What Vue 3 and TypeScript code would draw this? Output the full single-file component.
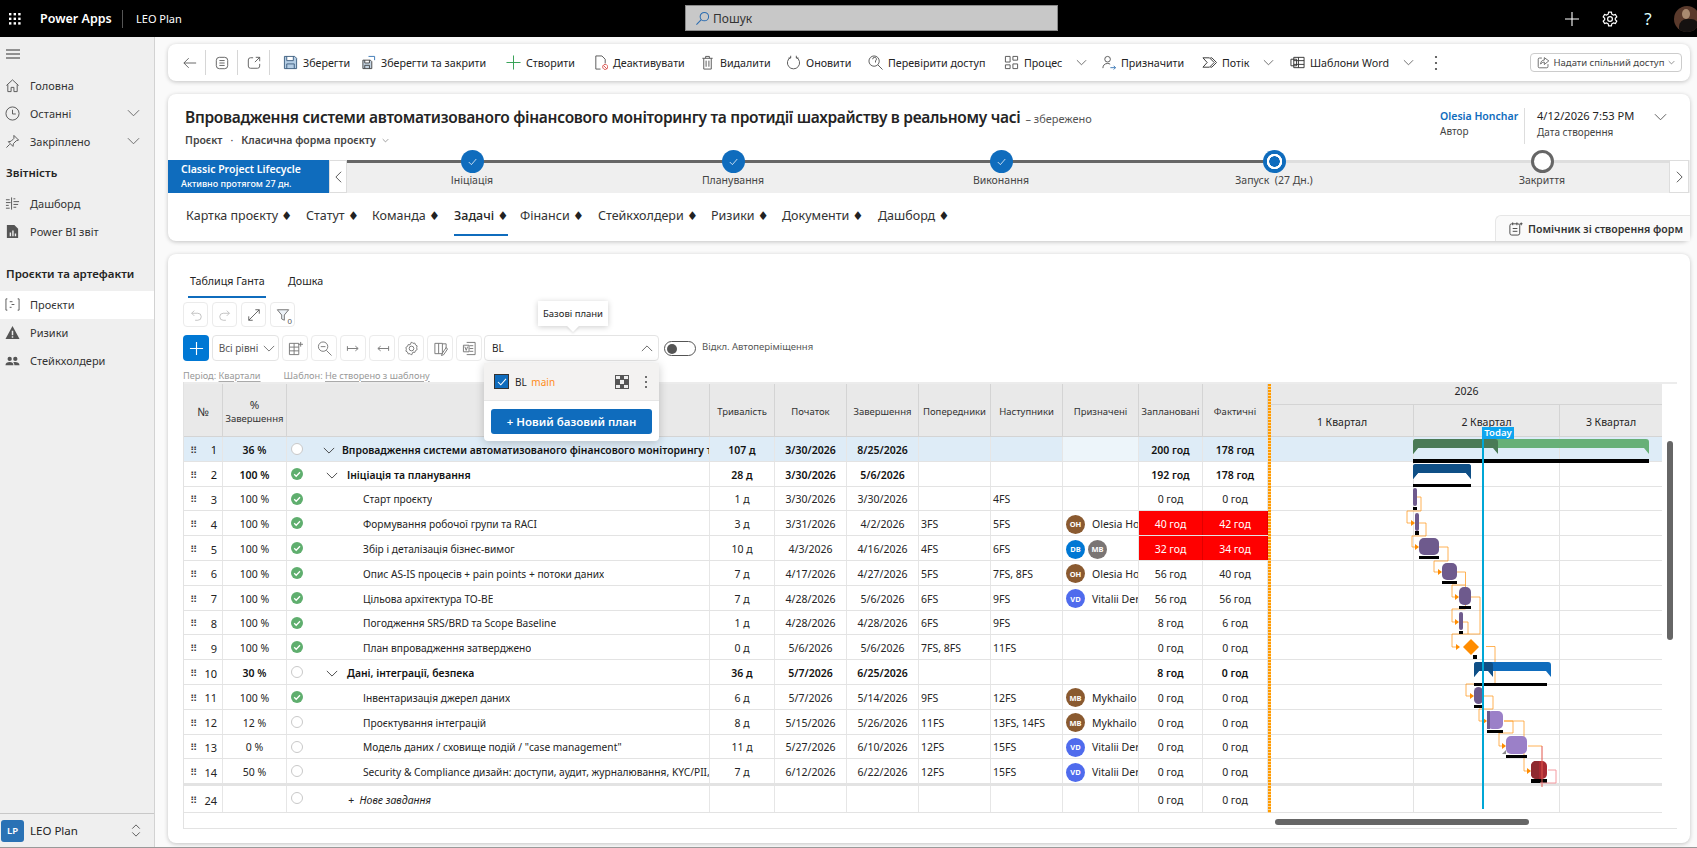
<template>
  <div class="app">
    <header class="topbar">
      <svg class="waffle" viewBox="0 0 14 14" width="14" height="14"><g fill="#fff"><rect v-for="d in waffle" :key="d[0] + '-' + d[1]" :x="d[0]" :y="d[1]" width="2.4" height="2.4" /></g></svg>
      <span class="brand">Power Apps</span>
      <span class="app-name">LEO Plan</span>
      <div class="search">
        <svg viewBox="0 0 16 16" width="15" height="15" fill="none" stroke="#2b6cb0" stroke-width="1.1"><circle cx="10" cy="6" r="4.5" /><path d="M6.7 9.3L1.5 14.5" /></svg>
        <span>Пошук</span>
      </div>
      <div class="top-actions">
        <svg viewBox="0 0 16 16" width="16" height="16" fill="none" stroke="#fff" stroke-width="1.1"><path d="M8 1v14M1 8h14" /></svg>
        <svg viewBox="0 0 16 16" width="16" height="16" fill="none" stroke="#fff" stroke-width="1.2"><circle cx="8" cy="8" r="2.4" /><path d="M6.6 1.2h2.8l.4 2 1.7.9 1.9-.7 1.4 2.5-1.5 1.3v1.6l1.5 1.3-1.4 2.5-1.9-.7-1.7.9-.4 2H6.6l-.4-2-1.7-.9-1.9.7-1.4-2.5 1.5-1.3V7.2L1.2 5.9l1.4-2.5 1.9.7 1.7-.9z" /></svg>
        <span class="help">?</span>
      </div>
      <div class="avatar-top"><b></b><i></i></div>
    </header>

    <div class="body">
      <aside class="nav">
        <div class="burger"><svg viewBox="0 0 14 10" width="14" height="10" fill="none" stroke="#333"><path d="M0 1h14M0 5h14M0 9h14" /></svg></div>
        <template v-for="n in navItems" :key="n.label">
          <div v-if="n.heading" class="nav-head" :class="{ gap: n.gap }">{{ n.label }}</div>
          <div v-else class="nav-item" :class="{ active: n.active }">
            <svg viewBox="0 0 16 16" width="15" height="15" :fill="n.solid ? '#555' : 'none'" :stroke="n.solid ? 'none' : '#555'"><path :d="n.icon" /></svg>
            <span>{{ n.label }}</span>
            <svg v-if="n.chev" class="nav-chev" viewBox="0 0 14 8" width="13" height="8" fill="none" stroke="#666"><path d="M1 1l6 6 6-6" /></svg>
          </div>
        </template>
        <div class="nav-foot">
          <span class="lp">LP</span>
          <span>LEO Plan</span>
          <svg viewBox="0 0 10 16" width="10" height="15" fill="none" stroke="#555"><path d="M1 6l4-4 4 4M1 10l4 4 4-4" /></svg>
        </div>
      </aside>

      <main class="main">
        <section class="cmdbar">
          <div class="cmd-lead">
            <svg viewBox="0 0 16 16" width="14" height="14" fill="none" stroke="#555"><path d="M15 8H1M6.5 2.5L1 8l5.500 5.500" /></svg>
            <i class="sep"></i>
            <svg viewBox="0 0 16 16" width="14" height="14" fill="none" stroke="#555"><rect x="1.5" y="1.5" width="13" height="13" rx="3.5" /><path d="M5 5.200h6M5 8h6M5 10.800h6" /></svg>
            <i class="sep"></i>
            <svg viewBox="0 0 16 16" width="14" height="14" fill="none" stroke="#555"><path d="M7 2H4a2.500 2.500 0 0 0-2.500 2.500v7A2.500 2.500 0 0 0 4 14h8a2.500 2.500 0 0 0 2.500-2.500V9M10 1.500h4.500V6M14.500 1.500L9 7" /></svg>
            <i class="sep"></i>
          </div>
          <div v-for="c in commands" :key="c.label" class="cmd" :style="{ width: c.w + 'px' }">
            <svg viewBox="0 0 16 16" width="15" height="15" :fill="c.fill || 'none'" :stroke="c.color || '#555'"><path :d="c.icon" /><path v-if="c.accent" :d="c.accent" :stroke="c.accentColor" fill="none" /></svg>
            <span>{{ c.label }}</span>
            <svg v-if="c.chev" class="cmd-chev" viewBox="0 0 12 7" width="11" height="7" fill="none" stroke="#666"><path d="M1 1l5 5 5-5" /></svg>
          </div>
          <svg class="cmd-dots" viewBox="0 0 4 16" width="4" height="16" fill="#444"><circle cx="2" cy="2" r="1.1" /><circle cx="2" cy="8" r="1.1" /><circle cx="2" cy="14" r="1.1" /></svg>
          <button class="share">
            <svg viewBox="0 0 16 16" width="13" height="13" fill="none" stroke="#555"><path d="M6 2.500H3A1.500 1.500 0 0 0 1.500 4v9A1.500 1.500 0 0 0 3 14.500h9a1.500 1.500 0 0 0 1.500-1.500v-3M9 2v3C6 5 4.500 7 4.500 10c1-1.800 2.500-2.500 4.500-2.500V10.500l5.500-4.500z" /></svg>
            Надати спільний доступ
            <svg viewBox="0 0 10 6" width="7" height="5" fill="none" stroke="#666"><path d="M1 1l4 4 4-4" /></svg>
          </button>
        </section>

        <section class="record">
          <div class="rec-top">
            <div class="rec-left">
              <div class="rec-title"><h1>Впровадження системи автоматизованого фінансового моніторингу та протидії шахрайству в реальному часі</h1><span>– збережено</span></div>
              <div class="rec-sub"><b>Проєкт</b><i>·</i><b>Класична форма проєкту</b><svg viewBox="0 0 10 6" width="7" height="5" fill="none" stroke="#777"><path d="M1 1l4 4 4-4" /></svg></div>
            </div>
            <div class="rec-meta">
              <div class="meta-a"><a>Olesia Honchar</a><small>Автор</small></div>
              <div class="meta-b"><span>4/12/2026 7:53 PM</span><small>Дата створення</small></div>
              <svg viewBox="0 0 14 8" width="13" height="8" fill="none" stroke="#555"><path d="M1 1l6 6 6-6" /></svg>
            </div>
          </div>

          <div class="bpf">
            <div class="stage"><b>Classic Project Lifecycle</b><span>Активно протягом 27 дн.</span></div>
            <div class="bpf-btn"><svg viewBox="0 0 8 14" width="7" height="14" fill="none" stroke="#444"><path d="M7 1L1 7l6 6" /></svg></div>
            <div class="track">
              <i class="track-done"></i>
              <div v-for="s in stages" :key="s.label" class="step">
                <span class="node" :class="s.state">
                  <svg v-if="s.state === 'done'" viewBox="0 0 12 10" width="9" height="8" fill="none" stroke="#fff"><path d="M1 5l3.500 3.500L11 1" /></svg>
                </span>
                <em>{{ s.label }}</em>
              </div>
            </div>
            <div class="bpf-btn next"><svg viewBox="0 0 8 14" width="7" height="14" fill="none" stroke="#444"><path d="M1 1l6 6-6 6" /></svg></div>
          </div>

          <nav class="rec-tabs">
            <div v-for="t in formTabs" :key="t.label" class="rec-tab" :style="{ width: t.w + 'px' }">
              <span :class="{ on: t.on }">{{ t.label }} <small>♦</small></span>
            </div>
          </nav>
          <div class="copilot">
            <svg viewBox="0 0 16 16" width="15" height="15" fill="none" stroke="#444"><rect x="2" y="3" width="10.5" height="12" rx="2" /><path d="M5 1.500v3M9.500 1.500v3M5 8h5M5 11h5" /><path d="M14 1l.6 1.400L16 3l-1.400.6L14 5l-.6-1.400L12 3l1.400-.6z" fill="#444" stroke="none" /></svg>
            Помічник зі створення форм
          </div>
        </section>

        <section class="plan">
          <div class="plan-tabs"><span class="on">Таблиця Ганта</span><span>Дошка</span></div>

          <div class="tools one">
            <button class="tb dim"><svg viewBox="0 0 16 16" width="14" height="14" fill="none" stroke="#bbb"><path d="M3 6h7a3.500 3.500 0 0 1 0 8H7M3 6l3-3M3 6l3 3" /></svg></button>
            <button class="tb dim"><svg viewBox="0 0 16 16" width="14" height="14" fill="none" stroke="#bbb"><path d="M13 6H6a3.500 3.500 0 0 0 0 8h3M13 6l-3-3M13 6l-3 3" /></svg></button>
            <button class="tb"><svg viewBox="0 0 16 16" width="14" height="14" fill="none" stroke="#555"><path d="M2 14L14 2M9.500 2H14v4.500M2 9.500V14h4.500" /></svg></button>
            <button class="tb filter"><svg viewBox="0 0 16 16" width="14" height="14" fill="#eef3f8" stroke="#666"><path d="M1.500 2h13L9.500 8v6l-3-1.500V8z" /></svg><small>0</small></button>
          </div>

          <div class="tools two">
            <button class="add"><svg viewBox="0 0 16 16" width="15" height="15" fill="none" stroke="#fff" stroke-width="1.2"><path d="M8 1v14M1 8h14" /></svg></button>
            <button class="levels">Всі рівні <svg viewBox="0 0 14 8" width="12" height="7" fill="none" stroke="#666"><path d="M1 1l6 6 6-6" /></svg></button>
            <button v-for="(ic, i) in toolIcons" :key="i" class="tb wide"><svg viewBox="0 0 16 16" width="15" height="15" fill="none" stroke="#777"><path :d="ic" /></svg></button>
            <div class="bl-select">BL <svg viewBox="0 0 14 8" width="12" height="7" fill="none" stroke="#555"><path d="M1 7l6-6 6 6" /></svg></div>
            <span class="toggle"><i></i></span>
            <span class="toggle-label">Відкл. Автоперіміщення</span>
          </div>

          <div class="period">
            <span>Період: <u>Квартали</u></span>
            <span>Шаблон: <u>Не створено з шаблону</u></span>
          </div>

          <div class="grid-wrap">
            <div class="grid-main">
              <div class="left">
                <div class="row head">
                  <div class="big">№</div><div><span><span class="big">%</span><br />Завершення</span></div><div></div>
                  <div v-for="h in heads" :key="h">{{ h }}</div>
                </div>
                <div v-for="r in rows" :key="r.n" class="row" :class="{ bold: r.bold, sel: r.n === 1 }">
                  <div class="c-n"><span class="drag">⠿</span><span>{{ r.n }}</span></div>
                  <div class="c-mid">{{ r.pct }}</div>
                  <div class="c-name">
                    <svg v-if="r.done" class="st" viewBox="0 0 12 12" width="12" height="12"><circle cx="6" cy="6" r="6" fill="#5fae6e" /><path d="M3.200 6.200l2 2 3.800-4" fill="none" stroke="#fff" stroke-width="1.3" /></svg>
                    <svg v-else class="st" viewBox="0 0 12 12" width="12" height="12"><circle cx="6" cy="6" r="5.5" fill="#fff" stroke="#c8c8c8" /></svg>
                    <svg v-if="r.bold" class="tree" :class="'lv' + r.level" viewBox="0 0 14 8" width="12" height="7" fill="none" stroke="#333"><path d="M1 1l6 6 6-6" /></svg>
                    <span class="nm" :class="r.bold ? 'nlv' + r.level : 'task'">{{ r.name }}</span>
                  </div>
                  <div class="c-mid">{{ r.dur }}</div>
                  <div class="c-mid">{{ r.start }}</div>
                  <div class="c-mid">{{ r.end }}</div>
                  <div class="c-dep">{{ r.pred }}</div>
                  <div class="c-dep">{{ r.succ }}</div>
                  <div class="c-who" :class="{ pale: r.n === 1 }">
                    <span v-for="a in r.people" :key="a.t" class="ava" :style="{ background: a.c }">{{ a.t }}</span>
                    <span v-if="r.who" class="who">{{ r.who }}</span>
                  </div>
                  <div class="c-mid" :class="{ red: r.red }">{{ r.plan }}</div>
                  <div class="c-mid" :class="{ red: r.red }">{{ r.fact }}</div>
                </div>
                <div class="row last">
                  <div class="c-n"><span class="drag">⠿</span><span>24</span></div>
                  <div></div>
                  <div class="c-name">
                    <svg class="st" viewBox="0 0 12 12" width="12" height="12"><circle cx="6" cy="6" r="5.5" fill="#fff" stroke="#c8c8c8" /></svg>
                    <span class="new-task">+ &nbsp;Нове завдання</span>
                  </div>
                  <div></div><div></div><div></div><div></div><div></div><div></div>
                  <div class="c-mid">0 год</div><div class="c-mid">0 год</div>
                </div>
              </div>

              <div class="divider"></div>

              <div class="gantt">
                <div class="g-year">2026</div>
                <div class="g-quarters"><div>1 Квартал</div><div>2 Квартал</div><div>3 Квартал</div></div>
                <div v-for="r in rows" :key="r.n" class="g-row" :class="{ sel: r.n === 1 }"><i></i><i></i><i></i></div>
                <div class="g-row last"><i></i><i></i><i></i></div>
                <svg class="g-canvas" viewBox="1271 437 392 376" width="392" height="376">
                  <g fill="none" stroke="#ff9a1f" stroke-opacity="0.75">
                    <polyline v-for="(l, i) in links" :key="i" :points="l" />
                  </g>
                  <g fill="#ff8c00"><path v-for="(a, i) in arrows" :key="i" :d="`M${a[0] - 4} ${a[1] - 3}L${a[0]} ${a[1]}L${a[0] - 4} ${a[1] + 3}z`" /></g>
                  <g v-for="s in summaries" :key="s.x"><path :d="summaryPath(s.x, s.y, s.w)" :fill="s.fill" /><path :d="summaryPath(s.x, s.y, s.dark)" :fill="s.darkFill" /></g>
                  <rect v-for="(b, i) in bars" :key="i" :x="b[0]" :y="b[1]" :width="b[2]" :height="b[3]" :rx="Math.min(5, b[2] / 2)" :fill="b[4]" />
                  <rect x="1487" y="711" width="3" height="18" fill="#6e5a8d" />
                  <path d="M1531 766a5 5 0 0 1 5-5h3v18h-3a5 5 0 0 1-5-5z" fill="#8f2a30" />
                  <rect v-for="(b, i) in baselines" :key="'b' + i" :x="b[0]" :y="b[1]" :width="b[2]" :height="b[3]" fill="#000" />
                  <path d="M1471 639l8 8-8 8-8-8z" fill="#ff8c00" />
                  <path d="M1502 754l4-4v4z" fill="#888" />
                  <polyline points="1542,746 1542,787" fill="none" stroke="#e2574c" />
                  <polyline points="1548,770 1556,770 1556,783 1540,783" fill="none" stroke="#f59aa0" />
                  <rect x="1482" y="437" width="2" height="372" fill="#00a7d6" />
                </svg>
                <span class="today">Today</span>
              </div>
            </div>
            <div class="hscroll"><i></i></div>
            <span class="vscroll"></span>
          </div>

          <div class="tip">Базові плани</div>
          <div class="bl-pop">
            <div class="bl-row">
              <span class="check"><svg viewBox="0 0 12 10" width="10" height="8" fill="none" stroke="#fff" stroke-width="1.3"><path d="M1 5l3.500 3.500L11 1" /></svg></span>
              <span class="bl-name">BL <em>main</em></span>
              <svg class="bl-ic" viewBox="0 0 14 14" width="14" height="14"><rect width="14" height="14" fill="#555" /><path d="M1 1h4v3H1zM9 1h4v3H9zM5 5h4v4H5zM1 10h4v3H1zM9 10h4v3H9z" fill="#eee" /></svg>
              <svg viewBox="0 0 4 14" width="4" height="14" fill="#444"><circle cx="2" cy="2" r="1" /><circle cx="2" cy="7" r="1" /><circle cx="2" cy="12" r="1" /></svg>
            </div>
            <button class="bl-new">+ Новий базовий план</button>
          </div>
        </section>
      </main>
    </div>
  </div>
</template>

<script setup lang="ts">
interface Person { t: string; c: string }
interface Row {
  n: number
  pct: string
  done: boolean
  name: string
  bold?: boolean
  level?: number
  dur: string
  start: string
  end: string
  pred?: string
  succ?: string
  people?: Person[]
  who?: string
  plan: string
  fact: string
  red?: boolean
}

const waffle: number[][] = []
for (let x = 0; x < 3; x++) for (let y = 0; y < 3; y++) waffle.push([1 + x * 4.6, 1 + y * 4.6])

const navItems = [
  { label: 'Головна', icon: 'M1.500 8L8 2l6.500 6M3 7v7.500h3.500V10h3v4.500H13V7' },
  { label: 'Останні', chev: true, icon: 'M8 1a7 7 0 1 0 0 14A7 7 0 0 0 8 1zM8 4v4.500h3.500' },
  { label: 'Закріплено', chev: true, icon: 'M9.500 1.500l5 5-2.500.7-3 3-.5 3-5-5 3-.5 3-3zM5 11l-3.500 3.500' },
  { label: 'Звітність', heading: true },
  { label: 'Дашборд', icon: 'M7 1.500v13M1 4h4M1 7h5M1 10h3M9 3h2M9 6h6M9 9h5M9 12h3M1 13h4' },
  { label: 'Power BI звіт', solid: true, icon: 'M2 1h8l4 4v10H2zM5 13h1.500V9H5zM7.700 13h1.500V7H7.700zM10.400 13h1.500V10h-1.500z' },
  { label: 'Проєкти та артефакти', heading: true, gap: true },
  { label: 'Проєкти', active: true, icon: 'M2.500 2H1v12h1.500M13.500 2H15v12h-1.500M5 5h3M7 8h3M5 11h2' },
  { label: 'Ризики', solid: true, icon: 'M8 1l7.500 14H.5zM7.200 6v5h1.600V6zM7.200 12v1.500h1.600V12z' },
  { label: 'Стейкхолдери', solid: true, icon: 'M5 4a2.300 2.300 0 1 1 0 4.600A2.300 2.300 0 0 1 5 4zM11 4a2.300 2.300 0 1 1 0 4.600A2.300 2.300 0 0 1 11 4zM.5 13c0-2.500 2-3.500 4.500-3.500s4 1 4 3.500zM10 13c0-1.500-.5-2.500-1.300-3.200 2.800-.8 6.800 0 6.800 3.200z' },
]

const commands = [
  { label: 'Зберегти', w: 78, icon: 'M1.500 1.500h11l2 2v11h-13zM4 1.500v4.500h7V1.500M4 14.500V9.500h8v5', color: '#3f5f80', fill: '#b4cde4' },
  { label: 'Зберегти та закрити', w: 145, icon: 'M2 5.500h8l1.500 1.500v7.500H2zM4 5.500v3h5v-3M4 14.500v-3.500h5v3.500', accent: 'M8 1.500h6.500v4', accentColor: '#3b78b5', color: '#444', fill: '#c4d4e2' },
  { label: 'Створити', w: 87, icon: 'M8 .5v15M.5 8h15', color: '#2e9e4f' },
  { label: 'Деактивувати', w: 107, icon: 'M3 1h6.500L13 4.500V9M3 1v14h5', accent: 'M13 10a2.700 2.700 0 1 0 .01 0zM11 11l4 4', accentColor: '#d9534f', color: '#555' },
  { label: 'Видалити', w: 86, icon: 'M2.500 3.500h11M6 3.500V1.500h4v2M4 3.500v11.500h8V3.500M6.500 6v6.500M9.500 6v6.500' },
  { label: 'Оновити', w: 82, icon: 'M5 2.500a6.500 6.500 0 1 0 6 0M5 .8v2.500H2.500M11 .8v2.500h2.500' },
  { label: 'Перевірити доступ', w: 136, icon: 'M6.500 1a5.500 5.500 0 1 0 0 11 5.500 5.500 0 0 0 0-11zM10.500 10.500l5 5M5 4.500a2 2 0 1 1 3 1.700V8' },
  { label: 'Процес', w: 97, chev: true, icon: 'M1.500 1.500h5v6h-5zM9.500 1.500h5v4h-5zM9.500 9.500h5v5h-5zM1.500 10.500h5v4h-5z', color: '#555' },
  { label: 'Призначити', w: 101, icon: 'M7 1.500a3 3 0 1 1 0 6 3 3 0 0 1 0-6zM2 14c0-3 2-5 5-5 1 0 2 .2 2.800.8', accent: 'M10 13.500h5.500M13.500 11.500l2 2-2 2', accentColor: '#3b78b5' },
  { label: 'Потік', w: 88, chev: true, icon: 'M1 3h7l5 5-5 5H1l4.500-5zM9 3h1.500l5 5-5 5H9', color: '#333' },
  { label: 'Шаблони Word', w: 141, chev: true, icon: 'M4 2.500h11v11H4zM9 2.500v11M4 6h11M4 10h11M1 4.500h6v7H1z', color: '#333' },
]

const stages = [
  { label: 'Ініціація', state: 'done' },
  { label: 'Планування', state: 'done' },
  { label: 'Виконання', state: 'done' },
  { label: 'Запуск  (27 Дн.)', state: 'active' },
  { label: 'Закриття', state: 'todo' },
]

const formTabs = [
  { label: 'Картка проєкту', w: 120 },
  { label: 'Статут', w: 66 },
  { label: 'Команда', w: 82 },
  { label: 'Задачі', w: 66, on: true },
  { label: 'Фінанси', w: 78 },
  { label: 'Стейкхолдери', w: 113 },
  { label: 'Ризики', w: 71 },
  { label: 'Документи', w: 96 },
  { label: 'Дашборд', w: 90 },
]

const toolIcons = [
  'M1.500 2.500h10v12h-10zM1.500 6.500h10M1.500 10.500h10M6.500 2.500v12M13.500 1v5M11 3.500h5',
  'M6.500 1a5 5 0 1 0 0 10 5 5 0 0 0 0-10zM4 6h5M10 10l5.500 5.500',
  'M1.500 8h11M1.500 5.500v5M10 5.500L13 8l-3 2.500',
  'M14.500 8h-11M14.500 5.500v5M6 5.500L3 8l3 2.500',
  'M8 5.500a2.500 2.500 0 1 0 0 5 2.500 2.500 0 0 0 0-5zM8 1l1.500 1.500 2-.3.8 2 1.700 1-.5 2 .5 2-1.700 1-.8 2-2-.3L8 15l-1.500-1.500-2 .3-.8-2-1.700-1 .5-2-.5-2 1.700-1 .8-2 2 .3z',
  'M2 2.500h8v11H2zM6 2.500v11M10 3h4v5M14 7l-4 6-1 2.500 2.500-1 4-6z',
  'M5 1.500h9v13H5M8 5h4M8 8h4M8 11h4M1.500 4.500h6v7h-6zM3 6l1.500 4L6 6',
]

const heads = ['Тривалість', 'Початок', 'Завершення', 'Попередники', 'Наступники', 'Призначені', 'Заплановані', 'Фактичні']

const OH: Person = { t: 'OH', c: '#8a5a30' }
const VD: Person = { t: 'VD', c: '#4f6bed' }
const MB: Person = { t: 'MB', c: '#8a5a30' }

const rows: Row[] = [
  { n: 1, pct: '36 %', done: false, name: 'Впровадження системи автоматизованого фінансового моніторингу та протидії шахрайству в реальному часі', bold: true, level: 0, dur: '107 д', start: '3/30/2026', end: '8/25/2026', plan: '200 год', fact: '178 год' },
  { n: 2, pct: '100 %', done: true, name: 'Ініціація та планування', bold: true, level: 1, dur: '28 д', start: '3/30/2026', end: '5/6/2026', plan: '192 год', fact: '178 год' },
  { n: 3, pct: '100 %', done: true, name: 'Старт проєкту', dur: '1 д', start: '3/30/2026', end: '3/30/2026', succ: '4FS', plan: '0 год', fact: '0 год' },
  { n: 4, pct: '100 %', done: true, name: 'Формування робочої групи та RACI', dur: '3 д', start: '3/31/2026', end: '4/2/2026', pred: '3FS', succ: '5FS', people: [OH], who: 'Olesia Honchar', plan: '40 год', fact: '42 год', red: true },
  { n: 5, pct: '100 %', done: true, name: 'Збір і деталізація бізнес-вимог', dur: '10 д', start: '4/3/2026', end: '4/16/2026', pred: '4FS', succ: '6FS', people: [{ t: 'DB', c: '#0078d4' }, { t: 'MB', c: '#7a7574' }], plan: '32 год', fact: '34 год', red: true },
  { n: 6, pct: '100 %', done: true, name: 'Опис AS-IS процесів + pain points + потоки даних', dur: '7 д', start: '4/17/2026', end: '4/27/2026', pred: '5FS', succ: '7FS, 8FS', people: [OH], who: 'Olesia Honchar', plan: '56 год', fact: '40 год' },
  { n: 7, pct: '100 %', done: true, name: 'Цільова архітектура TO-BE', dur: '7 д', start: '4/28/2026', end: '5/6/2026', pred: '6FS', succ: '9FS', people: [VD], who: 'Vitalii Derkach', plan: '56 год', fact: '56 год' },
  { n: 8, pct: '100 %', done: true, name: 'Погодження SRS/BRD та Scope Baseline', dur: '1 д', start: '4/28/2026', end: '4/28/2026', pred: '6FS', succ: '9FS', plan: '8 год', fact: '6 год' },
  { n: 9, pct: '100 %', done: true, name: 'План впровадження затверджено', dur: '0 д', start: '5/6/2026', end: '5/6/2026', pred: '7FS, 8FS', succ: '11FS', plan: '0 год', fact: '0 год' },
  { n: 10, pct: '30 %', done: false, name: 'Дані, інтеграції, безпека', bold: true, level: 1, dur: '36 д', start: '5/7/2026', end: '6/25/2026', plan: '8 год', fact: '0 год' },
  { n: 11, pct: '100 %', done: true, name: 'Інвентаризація джерел даних', dur: '6 д', start: '5/7/2026', end: '5/14/2026', pred: '9FS', succ: '12FS', people: [MB], who: 'Mykhailo B', plan: '0 год', fact: '0 год' },
  { n: 12, pct: '12 %', done: false, name: 'Проєктування інтеграцій', dur: '8 д', start: '5/15/2026', end: '5/26/2026', pred: '11FS', succ: '13FS, 14FS', people: [MB], who: 'Mykhailo B', plan: '0 год', fact: '0 год' },
  { n: 13, pct: '0 %', done: false, name: 'Модель даних / сховище подій / "case management"', dur: '11 д', start: '5/27/2026', end: '6/10/2026', pred: '12FS', succ: '15FS', people: [VD], who: 'Vitalii Derkach', plan: '0 год', fact: '0 год' },
  { n: 14, pct: '50 %', done: false, name: 'Security & Compliance дизайн: доступи, аудит, журналювання, KYC/PII, ризики', dur: '7 д', start: '6/12/2026', end: '6/22/2026', pred: '12FS', succ: '15FS', people: [VD], who: 'Vitalii Derkach', plan: '0 год', fact: '0 год' },
]

const PURPLE = '#6e5a8d'
const LILAC = '#9b80c8'
const bars: [number, number, number, number, string][] = [
  [1413, 488, 4, 18, PURPLE],
  [1415, 513, 4, 18, PURPLE],
  [1419, 538, 20, 17, PURPLE],
  [1442, 563, 15, 17, PURPLE],
  [1459, 587, 12, 18, PURPLE],
  [1459, 612, 4, 18, PURPLE],
  [1474, 687, 9, 17, PURPLE],
  [1487, 711, 16, 18, LILAC],
  [1506, 736, 21, 18, LILAC],
  [1531, 761, 16, 18, '#a82a33'],
]
const baselines = [
  [1413, 459, 236, 4],
  [1413, 484, 58, 3],
  [1413, 507, 4, 3],
  [1415, 531, 4, 4],
  [1419, 556, 20, 3],
  [1442, 581, 15, 3],
  [1459, 606, 12, 3],
  [1459, 631, 4, 3],
  [1473, 655, 4, 4],
  [1474, 683, 73, 3],
  [1474, 705, 8, 3],
  [1487, 730, 16, 3],
  [1506, 755, 21, 3],
  [1531, 779, 16, 4],
]
const summaries = [
  { x: 1413, y: 439, w: 236, dark: 85, fill: '#67b077', darkFill: '#4a7a56' },
  { x: 1413, y: 464, w: 58, dark: 58, fill: '#0f4f86', darkFill: '#0f4f86' },
  { x: 1474, y: 662, w: 77, dark: 19, fill: '#0f6cbd', darkFill: '#0f4f86' },
]
function summaryPath(x: number, y: number, w: number) {
  // bar with the two small wedges hanging from its ends
  const r = x + w
  return `M${x} ${y + 3}a3 3 0 0 1 3-3H${r - 3}a3 3 0 0 1 3 3v12l-5-6H${x + 5}l-5 6z`
}

const links = [
  '1417,497 1421,497 1421,511 1407,511 1407,523 1413,523',
  '1419,523 1426,523 1426,536 1412,536 1412,547 1418,547',
  '1439,547 1448,547 1448,561 1434,561 1434,572 1441,572',
  '1457,572 1465.5,572 1465.5,585 1452,585 1452,597 1458,597',
  '1465.5,585 1465.5,609 1452,609 1452,622 1458,622',
  '1471,597 1480,597 1480,634 1452,634 1452,647 1459,647',
  '1463,622 1468,622 1468,634',
  '1486,646.5 1495,646.5 1495,684 1466,684 1466,696 1473,696',
  '1484,696 1493,696 1493,709 1479,709 1479,721 1486,721',
  '1504,721 1513,721 1513,733 1499,733 1499,746 1505,746',
  '1504,721 1524,721 1524,771 1530,771',
  '1528,746 1542,746',
]
const arrows = [[1415, 523], [1419, 547], [1442, 572], [1459, 597], [1459, 622], [1460, 647], [1474, 696], [1487, 721], [1506, 746], [1531, 771]]
</script>

<style>
html, body { margin: 0; background: #fafafa; overflow: hidden; }
</style>

<style scoped>
.app { width: 1697px; height: 848px; display: flex; flex-direction: column; font-family: "Noto Sans", "Open Sans", sans-serif; color: #242424; overflow: hidden; box-sizing: border-box; border-bottom: 1px solid #999; }
.app * { box-sizing: border-box; }

.topbar { height: 37px; background: #000; color: #fff; display: flex; align-items: center; flex: none; position: relative; }
.waffle { margin-left: 8px; }
.brand { margin-left: 18px; font-size: 12.5px; font-weight: 600; width: 82px; white-space: nowrap; }
.app-name { font-size: 11px; border-left: 1px solid #555; padding-left: 13px; height: 18px; line-height: 18px; width: 120px; }
.search { position: absolute; left: 685px; top: 5px; width: 373px; height: 26px; background: #c8c8c8; border: 1px solid #8a8a8a; display: flex; align-items: center; gap: 3px; padding-left: 9px; font-size: 12px; color: #333; }
.top-actions { margin-left: auto; display: flex; align-items: center; gap: 22px; margin-right: 18px; }
.help { font-size: 17px; width: 16px; text-align: center; color: #dff; }
.avatar-top { width: 26px; height: 26px; border-radius: 50%; background: #5a3a2c; margin-right: -3px; position: relative; overflow: hidden; }
.avatar-top b { position: absolute; left: 8px; top: 3px; width: 8px; height: 10px; border-radius: 50%; background: #a98a70; }
.avatar-top i { position: absolute; left: 5px; top: 13px; width: 20px; height: 16px; border-radius: 8px 8px 0 0; background: #151110; }

.body { flex: 1; display: flex; min-height: 0; }
.nav { width: 155px; flex: none; background: #efefef; border-right: 1px solid #d2d2d2; display: flex; flex-direction: column; font-size: 11px; }
.burger { height: 34px; display: flex; align-items: center; padding-left: 6px; margin-bottom: 1px; }
.nav-item { height: 28px; display: flex; align-items: center; padding: 0 0 2px 5px; gap: 10px; color: #333; }
.nav-item.active { background: #fff; }
.nav-chev { margin-left: auto; margin-right: 14px; }
.nav-head { height: 34px; line-height: 34px; padding-left: 6px; font-weight: 600; font-size: 11.5px; color: #242424; }
.nav-head.gap { margin-top: 11px; }
.nav-foot { margin-top: auto; height: 34px; border-top: 1px solid #c8c8c8; display: flex; align-items: center; padding: 0 13px 0 1px; gap: 6px; font-size: 11.5px; }
.nav-foot svg { margin-left: auto; }
.lp { width: 23px; height: 22px; border-radius: 3px; background: #2a72b5; color: #fff; font-size: 9.5px; font-weight: 600; display: flex; align-items: center; justify-content: center; }

.main { flex: 1; position: relative; padding: 7px 7px 0 13px; display: flex; flex-direction: column; gap: 13px; min-width: 0; }
.cmdbar { height: 37px; flex: none; background: #fff; border-radius: 8px; box-shadow: 0 1px 4px rgba(0, 0, 0, .22); display: flex; align-items: center; font-size: 10.7px; padding-left: 15px; }
.cmd-lead { display: flex; align-items: center; width: 100px; gap: 8px; }
.sep { width: 1px; height: 25px; background: #d6d6d6; display: block; margin-right: 1px; }
.cmd { display: flex; align-items: center; gap: 5px; white-space: nowrap; flex: none; }
.cmd-chev { margin-left: 9px; }
.cmd-dots { margin-left: 3px; }
.share { margin-left: auto; margin-right: 8px; width: 152px; height: 19px; border: 1px solid #ccc; border-radius: 4px; background: #fff; font: inherit; font-size: 9.5px; color: #444; display: flex; align-items: center; justify-content: center; gap: 4px; padding: 0; white-space: nowrap; }

.record { height: 147px; flex: none; background: #fff; border-radius: 8px; box-shadow: 0 1px 4px rgba(0, 0, 0, .22); position: relative; }
.rec-top { height: 66px; display: flex; justify-content: space-between; padding: 12px 23px 0 17px; }
.rec-title { display: flex; align-items: baseline; gap: 5px; white-space: nowrap; }
.rec-title h1 { margin: 0; font-size: 15.5px; letter-spacing: -0.3px; font-weight: 600; line-height: 22px; color: #242424; }
.rec-title span { font-size: 11px; color: #555; }
.rec-sub { margin-top: 5px; font-size: 10.5px; display: flex; align-items: center; gap: 6px; color: #444; }
.rec-sub b { font-weight: 600; }
.rec-sub i { font-style: normal; margin: 0 2px; }
.rec-meta { display: flex; align-items: flex-start; font-size: 11.1px; padding-top: 2px; }
.meta-a { width: 84px; display: flex; flex-direction: column; }
.meta-a a { color: #0f6cbd; font-weight: 600; white-space: nowrap; font-size: 10.5px; line-height: 16px; }
.rec-meta small { font-size: 10px; margin-top: 0; color: #444; display: block; }
.meta-b { border-left: 1px solid #ddd; padding: 0 0 4px 12px; width: 130px; display: flex; flex-direction: column; white-space: nowrap; line-height: 16px; }
.rec-meta > svg { margin-top: 5px; }

.bpf { height: 33px; display: flex; background: #efefef; }
.stage { width: 161px; background: #0f6cbd; color: #fff; padding: 2px 0 0 13px; display: flex; flex-direction: column; white-space: nowrap; }
.stage b { font-size: 10.5px; font-weight: 600; line-height: 15px; }
.stage span { font-size: 9px; line-height: 13px; font-weight: 500; }
.bpf-btn { width: 18px; background: #fff; border: 1px solid #ddd; display: flex; align-items: center; justify-content: center; }
.bpf-btn.next { width: 20px; margin-right: 1px; }
.track { flex: 1; position: relative; display: grid; grid-template-columns: 250px 272px 264px 282px 1fr; border-top: 3px solid #dedede; }
.track-done { position: absolute; left: 0; top: -3px; width: 927px; height: 3px; background: #666; }
.step { display: flex; flex-direction: column; align-items: center; margin-top: -13px; position: relative; }
.node { width: 23px; height: 23px; border-radius: 50%; display: flex; align-items: center; justify-content: center; background: #0f6cbd; }
.node.active { background: radial-gradient(circle, #0f6cbd 0 5px, #fff 5.5px 7.5px, #0f6cbd 8px); }
.node.todo { background: #fff; border: 3px solid #666; }
.step em { font-style: normal; font-size: 10.5px; margin-top: 0; white-space: pre; color: #444; line-height: 15px; }

.rec-tabs { height: 48px; display: flex; padding-left: 18px; font-size: 12.5px; align-items: stretch; }
.rec-tab { display: flex; flex: none; white-space: nowrap; }
.rec-tab span { height: 43px; line-height: 46px; color: #333; }
.rec-tab span.on { border-bottom: 2px solid #0f6cbd; color: #242424; font-weight: 500; }
.rec-tab small { font-size: 12px; font-family: "DejaVu Sans", sans-serif; color: #222; line-height: 1; }
.copilot { position: absolute; right: 0; bottom: 0; width: 195px; height: 26px; background: #fafafa; border: 1px solid #e6e6e6; border-width: 1px 0 0 1px; border-radius: 6px 0 0 0; display: flex; align-items: center; gap: 5px; padding-left: 12px; font-size: 10.6px; font-weight: 600; white-space: nowrap; color: #333; }

.plan { flex: 1; min-height: 0; margin-bottom: 4px; background: #fff; border-radius: 8px; box-shadow: 0 1px 4px rgba(0, 0, 0, .22); position: relative; padding: 14px 13px 0 15px; }
.plan-tabs { height: 30px; display: flex; gap: 20px; font-size: 10.7px; padding-left: 5px; }
.plan-tabs span { height: 30px; line-height: 26px; padding: 0 2px; white-space: nowrap; }
.plan-tabs .on { width: 78px; border-bottom: 2px solid #0f6cbd; padding: 0 0 0 2px; }
.tools { display: flex; align-items: center; gap: 4px; }
.tools.one { margin-top: 4px; height: 25px; }
.tools.two { margin-top: 8px; height: 26px; gap: 3px; }
.tb { width: 25px; height: 25px; border: 1px solid #ebebeb; border-radius: 4px; background: #fff; display: flex; align-items: center; justify-content: center; padding: 0; position: relative; }
.tb.wide { height: 26px; width: 26px; }
.filter small { position: absolute; right: 2px; bottom: 0; font-size: 8px; color: #555; }
.add { width: 26px; height: 26px; border: 0; border-radius: 4px; background: #0078d4; display: flex; align-items: center; justify-content: center; padding: 0; }
.levels { width: 67px; height: 26px; border: 1px solid #e4e4e4; border-radius: 4px; background: #fff; font: inherit; font-size: 10px; color: #555; display: flex; align-items: center; justify-content: center; gap: 5px; padding: 0 0 0 3px; white-space: nowrap; }
.bl-select { width: 175px; height: 26px; border: 1px solid #e4e4e4; border-radius: 4px; font-size: 10px; display: flex; align-items: center; justify-content: space-between; padding: 0 5px 0 7px; margin-left: -1px; }
.toggle { width: 32px; height: 15px; border: 1px solid #555; border-radius: 8px; margin-left: 2px; padding: 2px; display: block; }
.toggle i { display: block; width: 10px; height: 10px; border-radius: 50%; background: #555; }
.toggle-label { font-size: 9.5px; color: #555; margin: -4px 0 0 3px; white-space: nowrap; }
.period { height: 21px; display: flex; align-items: center; gap: 23px; font-size: 9.2px; color: #999; white-space: nowrap; padding-top: 7px; }
.period u { text-decoration-color: #aaa; text-underline-offset: 2px; }

.grid-wrap { width: 1494px; position: relative; border-left: 1px solid #e2e2e2; }
.grid-wrap::before { content: ''; position: absolute; left: 0; right: 0; top: 0; height: 2px; background: #ececec; }
.grid-main { display: flex; align-items: flex-start; }
.left { width: 1084px; flex: none; }
.row { display: grid; grid-template-columns: 39px 64px 423px 65px 72px 72px 72px 72px 76px 64px 65px; height: 24.8px; font-size: 10.5px; border-bottom: 1px solid #e3e3e3; }
.row > div { border-right: 1px solid #e6e6e6; min-width: 0; display: flex; align-items: center; overflow: hidden; white-space: nowrap; padding-top: 2px; }
.row.head { height: 55px; background: #e9e9e9; border-bottom: 1px solid #d4d4d4; padding-top: 2px; font-size: 9.5px; }
.row.head > div { justify-content: center; text-align: center; border-right: 1px solid #d4d4d4; color: #333; line-height: 13px; padding-top: 3px; }
.row.head .big { font-size: 11.5px; }
.row.bold { font-weight: 600; color: #111; }
.row.sel { background: #deecf7; }
.c-n { justify-content: space-between; padding: 2px 5px 0 6px; font-weight: 400; font-size: 11px; }
.drag { font-size: 10px; color: #333; }
.c-mid { justify-content: center; }
.c-dep { padding-left: 2px; }
.c-name { position: relative; padding-left: 4px; }
.st { position: absolute; left: 4px; top: 6px; }
.tree { position: absolute; top: 10px; }
.tree.lv0 { left: 36px; }
.tree.lv1 { left: 39px; }
.nm { overflow: hidden; }
.nlv0 { padding-left: 51px; font-size: 10.4px; }
.nlv1 { padding-left: 56px; font-size: 10.4px; }
.task { padding-left: 72px; font-size: 10.2px; }
.c-who { gap: 3px; padding-left: 3px; }
.c-who.pale { background: #edf5fa; }
.ava { width: 19px; height: 19px; border-radius: 50%; color: #fff; font-size: 7.5px; font-weight: 700; display: flex; align-items: center; justify-content: center; flex: none; }
.who { margin-left: 4px; }
.red { background: #ff0000; color: #fff; border-right-color: #e00000 !important; }
.row.last { height: 29px; border-top: 2px solid #e3e3e3; }
.new-task { font-style: italic; padding-left: 57px; }

.divider { width: 3px; flex: none; align-self: stretch; margin-top: 2px; background: repeating-linear-gradient(to bottom, #ff9a00 0 2px, #ffd38a 2px 3px); }
.gantt { width: 391px; flex: none; position: relative; font-size: 10.5px; }
.g-year { height: 23px; background: #e9e9e9; border-bottom: 1px solid #d4d4d4; border-top: 2px solid #ececec; display: flex; align-items: center; justify-content: center; padding-bottom: 6px; }
.g-quarters { height: 32px; display: grid; grid-template-columns: 143px 146px 102px; background: #e9e9e9; border-bottom: 1px solid #d4d4d4; }
.g-quarters div { display: flex; align-items: center; justify-content: center; border-right: 1px solid #d4d4d4; padding-top: 3px; }
.g-quarters div:last-child { border-right: 0; }
.g-row { height: 24.8px; display: grid; grid-template-columns: 143px 146px 102px; border-bottom: 1px solid #e3e3e3; }
.g-row i { border-right: 1px solid #e3e3e3; display: block; }
.g-row i:last-child { border-right: 0; }
.g-row.sel { background: #deecf7; }
.g-row.last { height: 29px; border-top: 2px solid #e3e3e3; }
.g-canvas { position: absolute; left: 0; top: 55px; }
.today { position: absolute; left: 211px; top: 45px; width: 32px; height: 12px; background: #0ea5f0; color: #fff; font-size: 9.5px; font-weight: 600; line-height: 12px; text-align: center; }
.hscroll { height: 16px; border-bottom: 1px solid #e3e3e3; position: relative; }
.hscroll i { position: absolute; left: 1091px; top: 6px; width: 254px; height: 6px; border-radius: 3px; background: #666; }
.vscroll { position: absolute; left: 1483px; top: 59px; width: 6px; height: 199px; border-radius: 3px; background: #666; }

.tip { position: absolute; left: 370px; top: 47px; width: 70px; height: 25px; background: #fff; box-shadow: 0 1px 6px rgba(0, 0, 0, .2); font-size: 9.5px; display: flex; align-items: center; justify-content: center; white-space: nowrap; }
.tip::after { content: ''; position: absolute; left: 29px; top: 19px; width: 12px; height: 12px; background: #fff; transform: rotate(45deg) scale(.7); box-shadow: 2px 2px 3px rgba(0, 0, 0, .08); }
.bl-pop { position: absolute; left: 316px; top: 109px; width: 175px; height: 78px; background: #fff; border-radius: 0 0 4px 4px; box-shadow: 0 2px 10px rgba(0, 0, 0, .2); z-index: 3; }
.bl-row { height: 38px; background: #f3f2f1; display: flex; align-items: center; padding: 0 11px 0 10px; border-bottom: 1px solid #e6e6e6; }
.check { width: 15px; height: 15px; background: #0f6cbd; border: 1px solid #333; display: flex; align-items: center; justify-content: center; }
.bl-name { margin-left: 6px; font-size: 10px; flex: 1; }
.bl-name em { color: #ff8c1a; font-style: normal; margin-left: 2px; }
.bl-ic { margin-right: 15px; }
.bl-new { display: block; margin: 8px auto 0; width: 161px; height: 25px; border: 0; border-radius: 3px; background: #0f6cbd; color: #fff; font: inherit; font-size: 11.5px; font-weight: 600; padding: 0; white-space: nowrap; }
</style>
